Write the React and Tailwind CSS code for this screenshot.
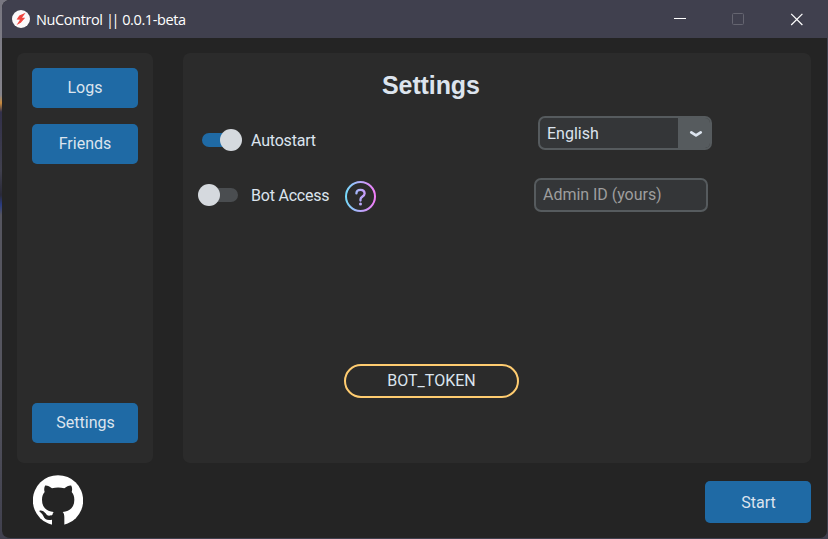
const robotoText = "font-['Roboto',sans-serif] text-[16px] leading-none text-[#dce4ee]";

function NavButton({ children, className = "" }) {
  return (
    <button className={`${robotoText} flex h-10 w-[106px] items-center justify-center rounded-[5px] bg-[#1f6aa5] ${className}`}>
      {children}
    </button>
  );
}

function Toggle({ on }) {
  return (
    <div className={`flex h-[22px] w-10 items-center rounded-full ${on ? "ml-1 justify-end" : "justify-start"}`}>
      {on && <span className="-mr-3 h-[14px] w-[30px] rounded-full bg-[#1f6aa5]" />}
      <span className="z-10 size-[22px] shrink-0 rounded-full bg-[#d5d9de]" />
      {!on && <span className="-ml-3 h-[14px] w-[30px] rounded-full bg-[#4a4d50]" />}
    </div>
  );
}

function TitleBar() {
  return (
    <header className="flex h-[38px] shrink-0 items-center bg-[#40404e] pl-[10px]">
      <svg width="18" height="18" viewBox="0 0 18 18">
        <circle cx="9" cy="9" r="9" fill="#fbf9fa" />
        <path d="M13.6 2.8 7.3 5.4 4.6 9.6l3.4.1-3.4 5.2 4.2-2.2 4.4-5H10z" fill="#f0453f" />
      </svg>
      <span className="mt-[2px] ml-[6px] font-['Open_Sans',sans-serif] text-[14.5px] leading-none tracking-[-0.38px] text-white">
        NuControl <span className="tracking-[-2.6px]">||</span>
        <span className="ml-[2px]"> 0.0.1-beta</span>
      </span>
      <div className="mr-6 ml-auto flex items-center gap-[46px]">
        <svg width="12" height="12" viewBox="0 0 12 12"><path d="M0 5.5h12" stroke="#fff" /></svg>
        <svg width="12" height="12" viewBox="0 0 12 12"><rect x=".5" y=".5" width="11" height="11" rx="1" fill="none" stroke="#656570" /></svg>
        <svg width="13" height="13" viewBox="0 0 13 13"><path d="m1.2.8 11.2 11.2m0-11.2L1.2 12" stroke="#fff" strokeWidth="1.2" /></svg>
      </div>
    </header>
  );
}

function HelpIcon() {
  return (
    <svg width="32" height="32" viewBox="0 0 32 32" fill="none" className="mt-[3px] ml-4">
      <defs>
        <linearGradient id="help" gradientUnits="userSpaceOnUse" x1="0" y1="16" x2="32" y2="16">
          <stop stopColor="#72dcfa" />
          <stop offset=".5" stopColor="#b9a8fa" />
          <stop offset="1" stopColor="#f878f8" />
        </linearGradient>
      </defs>
      <g stroke="url(#help)" strokeLinecap="round" strokeLinejoin="round">
        <circle cx="15.5" cy="15.5" r="14.5" strokeWidth="2" />
        <path d="M11.4 12.4c0-2.1 1.7-3.6 4.1-3.6s4.1 1.5 4.1 3.7c0 3-4.1 2.9-4.1 5.8v1.2" strokeWidth="2.3" />
      </g>
      <circle cx="15.5" cy="23" r="1.5" fill="#b9a8fa" />
    </svg>
  );
}

function GithubMark() {
  return (
    <svg width="50" height="50" viewBox="0 0 150 150">
      <circle cx="75" cy="76" r="75.5" fill="#fff" />
      <path
        fill="#242424"
        d="M57 150v-16c-15 3-22-1-26-11-3-7-7-10-11-13-3-4 5-5 11-1 8 5 9 13 17 13 5 0 8-1 10-2 1-4 2-7 4-9-21-2-35-13-35-37 0-10 3-17 8-23-2-6-2-12 1-19 7-1 14 3 21 8 12-3 25-3 37 0 7-5 14-9 21-8 3 7 3 13 1 19 5 6 8 13 8 23 0 24-14 35-35 37 4 4 5 9 5 16v23z"
      />
    </svg>
  );
}

export default function App() {
  return (
    <div className="h-[539px] w-[828px] overflow-hidden bg-[linear-gradient(#777680_0,#85848c_95px,#c98a3c_103px,#32304a_112px,#40404e_170px,#292938_195px,#2a3c82_205px,#55555f_215px,#55555f_380px,#40404e_539px)] pl-[2px]">
      <div className="flex h-full w-[826px] flex-col overflow-hidden rounded-tl-[8px] rounded-b-[8px] border-r border-b border-[#40404e] bg-[#242424]">
        <TitleBar />
        <div className="mt-[15px] flex h-[410px] shrink-0 gap-[30px] pl-[15px]">
          <nav className="flex w-[136px] flex-col items-center gap-4 rounded-[7px] bg-[#2b2b2b] pt-[15px] pb-5">
            <NavButton>Logs</NavButton>
            <NavButton>Friends</NavButton>
            <NavButton className="mt-auto pl-px">Settings</NavButton>
          </nav>
          <main className="flex w-[628px] flex-col rounded-[7px] bg-[#2b2b2b]">
            <h1 className="mt-[18px] mb-px ml-[199px] font-['Liberation_Sans',Arial,sans-serif] text-[25px] leading-[28px] font-bold tracking-[-0.1px] text-[#dce4ee]">
              Settings
            </h1>
            <div className="mt-4 flex h-[34px] items-center pl-[15px]">
              <div className="flex w-[340px] items-center pt-[13px]">
                <Toggle on />
                <span className={`${robotoText} mt-[2px] ml-[9px] tracking-[-0.2px]`}>Autostart</span>
              </div>
              <div className="flex h-[34px] w-[174px] overflow-hidden rounded-[7px] border-2 border-[#565b5e] bg-[#343638]">
                <span className={`${robotoText} flex flex-1 items-center pt-[2px] pl-[7px]`}>English</span>
                <span className="flex w-8 items-center justify-center bg-[#565b5e] pt-px pl-[3px]">
                  <svg width="14" height="8" viewBox="0 0 14 8" fill="none" stroke="#dce4ee" strokeWidth="2.8" strokeLinecap="round" strokeLinejoin="round">
                    <path d="m2.3 2.4 4.7 3 4.7-3" />
                  </svg>
                </span>
              </div>
            </div>
            <div className="mt-7 flex h-[34px] items-center pl-[15px]">
              <div className="flex w-[336px] items-center">
                <Toggle />
                <span className={`${robotoText} mt-[2px] ml-[13px] tracking-[-0.22px]`}>Bot Access</span>
                <HelpIcon />
              </div>
              <div className="flex h-[34px] w-[174px] items-center rounded-[7px] border-2 border-[#565b5e] bg-[#343638] pl-[7px] font-['Roboto',sans-serif] text-[16px] leading-none tracking-[-0.03px] text-[#9e9e9e]">
                Admin ID (yours)
              </div>
            </div>
            <button className={`${robotoText} mt-[152px] ml-[161px] flex h-[34px] w-[175px] items-center justify-center rounded-full border-2 border-[#ffcc70]`}>
              BOT_TOKEN
            </button>
          </main>
        </div>
        <footer className="flex items-start justify-between pt-3 pr-4 pl-[31px]">
          <GithubMark />
          <NavButton className="mt-[6px] h-[42px]! pt-[2px] pl-px">Start</NavButton>
        </footer>
      </div>
    </div>
  );
}
